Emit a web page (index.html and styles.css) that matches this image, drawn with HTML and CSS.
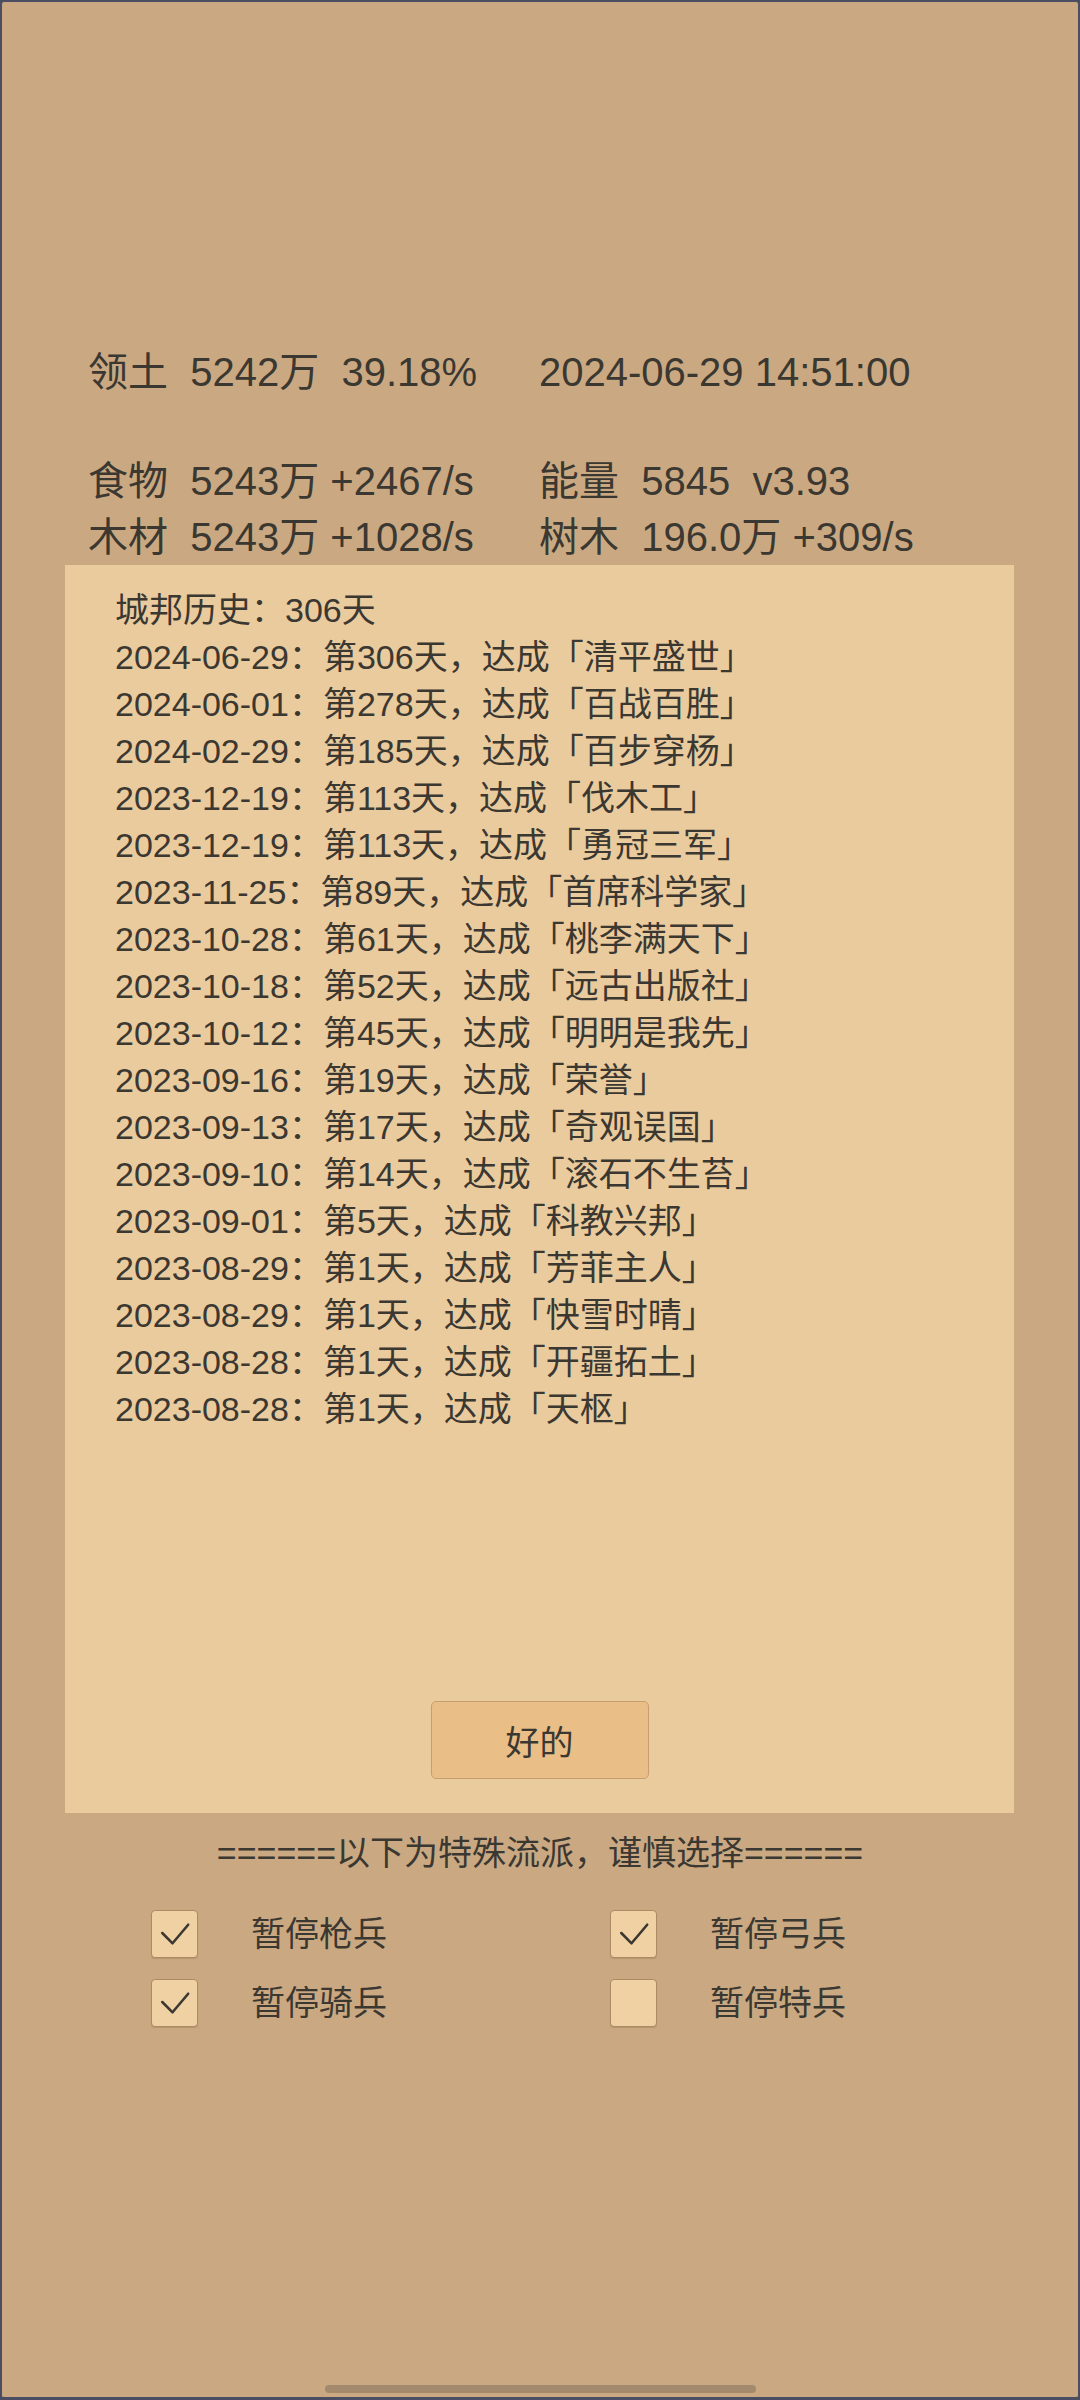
FILE: index.html
```html
<!DOCTYPE html>
<html lang="zh-CN">
<head>
<meta charset="utf-8">
<title>城邦历史</title>
<link rel="stylesheet" href="styles.css">
</head>
<body>
<div class="screen">
  <div class="stats">
    <div class="stat-row">
      <span class="cell">领土  5242万  39.18%</span>
      <span class="cell">2024-06-29 14:51:00</span>
    </div>
    <div class="stat-row spaced">
      <span class="cell">食物  5243万 +2467/s</span>
      <span class="cell">能量  5845  v3.93</span>
    </div>
    <div class="stat-row">
      <span class="cell">木材  5243万 +1028/s</span>
      <span class="cell">树木  196.0万 +309/s</span>
    </div>
  </div>

  <div class="panel">
    <div class="history">
      <div class="line">城邦历史：306天</div>
      <div class="line">2024-06-29：第306天，达成「清平盛世」</div>
      <div class="line">2024-06-01：第278天，达成「百战百胜」</div>
      <div class="line">2024-02-29：第185天，达成「百步穿杨」</div>
      <div class="line">2023-12-19：第113天，达成「伐木工」</div>
      <div class="line">2023-12-19：第113天，达成「勇冠三军」</div>
      <div class="line">2023-11-25：第89天，达成「首席科学家」</div>
      <div class="line">2023-10-28：第61天，达成「桃李满天下」</div>
      <div class="line">2023-10-18：第52天，达成「远古出版社」</div>
      <div class="line">2023-10-12：第45天，达成「明明是我先」</div>
      <div class="line">2023-09-16：第19天，达成「荣誉」</div>
      <div class="line">2023-09-13：第17天，达成「奇观误国」</div>
      <div class="line">2023-09-10：第14天，达成「滚石不生苔」</div>
      <div class="line">2023-09-01：第5天，达成「科教兴邦」</div>
      <div class="line">2023-08-29：第1天，达成「芳菲主人」</div>
      <div class="line">2023-08-29：第1天，达成「快雪时晴」</div>
      <div class="line">2023-08-28：第1天，达成「开疆拓土」</div>
      <div class="line">2023-08-28：第1天，达成「天枢」</div>
    </div>
    <div class="panel-foot">
      <button class="btn" type="button">好的</button>
    </div>
  </div>

  <div class="divider">======以下为特殊流派，谨慎选择======</div>

  <div class="options">
    <div class="opt">
      <span class="box"><svg viewBox="0 0 46 48" width="46" height="48"><path d="M10.5 23 L21 33.5 L37 14.5" fill="none" stroke="#3b3731" stroke-width="2.6" stroke-linecap="round" stroke-linejoin="round"/></svg></span>
      <span class="opt-label">暂停枪兵</span>
    </div>
    <div class="opt">
      <span class="box"><svg viewBox="0 0 46 48" width="46" height="48"><path d="M10.5 23 L21 33.5 L37 14.5" fill="none" stroke="#3b3731" stroke-width="2.6" stroke-linecap="round" stroke-linejoin="round"/></svg></span>
      <span class="opt-label">暂停弓兵</span>
    </div>
    <div class="opt">
      <span class="box"><svg viewBox="0 0 46 48" width="46" height="48"><path d="M10.5 23 L21 33.5 L37 14.5" fill="none" stroke="#3b3731" stroke-width="2.6" stroke-linecap="round" stroke-linejoin="round"/></svg></span>
      <span class="opt-label">暂停骑兵</span>
    </div>
    <div class="opt">
      <span class="box"></span>
      <span class="opt-label">暂停特兵</span>
    </div>
  </div>

  <div class="nav-pill"></div>
</div>
</body>
</html>
```
FILE: styles.css
```css
* { box-sizing: border-box; }

html, body {
  margin: 0;
  padding: 0;
  background: #4b4e62;
}

body {
  font-family: "Liberation Sans", "Noto Sans CJK SC", sans-serif;
  color: #3b3731;
}

.screen {
  width: 1080px;
  height: 2400px;
  background: #caa982;
  border: 2px solid #4b4e62;
  border-bottom-width: 3px;
  border-radius: 4px;
  display: flex;
  flex-direction: column;
  padding-top: 342px;
}

.stats {
  padding-left: 86px;
  font-size: 40px;
  line-height: 56px;
}

.stat-row {
  display: grid;
  grid-template-columns: 451px 1fr;
  white-space: pre;
}

.stat-row.spaced {
  margin-top: 53px;
}

.panel {
  margin: 0 64px 0 63px;
  height: 1248px;
  background: #eacb9e;
  padding: 22px 0 34px 50px;
  display: flex;
  flex-direction: column;
}

.history {
  font-size: 34px;
  line-height: 47px;
}

.panel-foot {
  margin-top: auto;
  display: flex;
  justify-content: center;
  padding-right: 50px;
}

.btn {
  width: 218px;
  height: 78px;
  background: #e9be87;
  border: 1.5px solid #c59f6f;
  border-radius: 5px;
  font-family: "Noto Sans CJK SC", "Liberation Sans", sans-serif;
  font-size: 34px;
  color: #3b3731;
  padding: 0;
}

.divider {
  margin-top: 17px;
  text-align: center;
  font-size: 34px;
  line-height: 47px;
}

.options {
  margin-top: 33px;
  padding-left: 149px;
  display: grid;
  grid-template-columns: 459px 459px;
  row-gap: 21px;
}

.opt {
  display: flex;
  align-items: center;
  height: 48px;
}

.box {
  width: 47px;
  height: 48px;
  flex: none;
  background: #efd1a4;
  border: 1.5px solid #ab8b63;
  border-radius: 4px;
  display: flex;
  align-items: center;
  justify-content: center;
  box-shadow: 0 1px 1px rgba(120, 90, 50, 0.25);
}

.box svg {
  display: block;
}

.opt-label {
  margin-left: 53px;
  font-size: 34px;
  line-height: 48px;
}

.nav-pill {
  margin: auto auto 4px;
  width: 431px;
  height: 8px;
  border-radius: 4px;
  background: #a38a6d;
}
```
